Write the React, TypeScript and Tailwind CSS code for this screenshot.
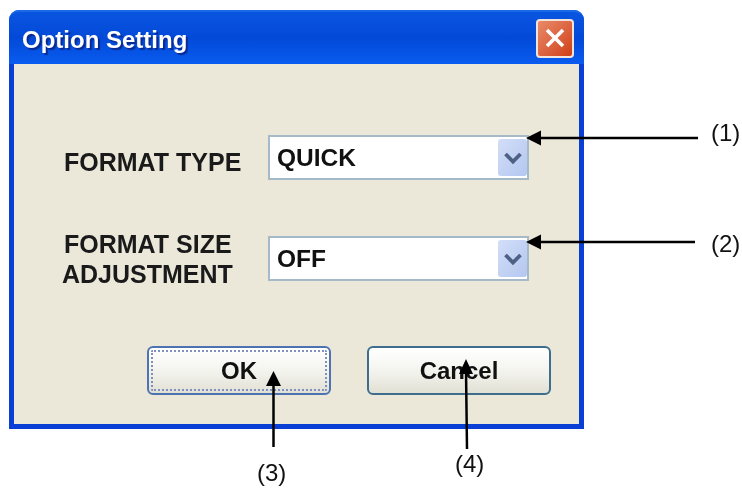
const labelFont = "font-['Liberation_Sans',sans-serif]";

function Combo({ value }: { value: string }) {
  return (
    <div className="flex h-[45px] w-[261px] items-center justify-between border-2 border-[#a5b9c9] bg-white pl-[7px]">
      <span className="pt-[1px] text-[24.5px] font-bold text-[#111]">{value}</span>
      <span className="flex h-[37px] w-[29px] items-center justify-center rounded-[3px] bg-gradient-to-br from-[#d3def8] to-[#b4c7f0]">
        <svg width="20" height="14" viewBox="0 0 20 14" fill="none">
          <path d="M2.5 3 10 10.5 17.5 3" stroke="#4d6185" strokeWidth="3.8" />
        </svg>
      </span>
    </div>
  );
}

function Button({ label, focused }: { label: string; focused?: boolean }) {
  return (
    <button
      className={`flex h-[49px] w-[184px] items-center justify-center rounded-[6px] border-2 bg-gradient-to-b from-white via-[#f4f4ef] to-[#e2e0d4] text-[24px] font-bold text-[#111] ${
        focused ? 'border-[#4d74b0]' : 'border-[#3f6d8e]'
      }`}
    >
      {focused ? (
        <span className="flex h-[41px] w-[176px] items-center justify-center rounded-[2px] border-2 border-dotted border-[#7f8fc0]">
          {label}
        </span>
      ) : (
        label
      )}
    </button>
  );
}

export default function App() {
  return (
    <div className={`relative h-[493px] w-[742px] overflow-hidden bg-white pl-[9px] pt-[10px] blur-[0.4px] ${labelFont}`}>
      <div className="flex h-[419px] w-[575px] flex-col rounded-t-[10px] bg-[#0a3fd6] px-[5px] pb-[5px]">
        <div className="-mx-[5px] flex h-[54px] shrink-0 items-center justify-between rounded-t-[10px] border-t-2 border-[#1a6ae8] bg-gradient-to-b from-[#0a55e0] via-[#0349d8] to-[#0a5cf0] pl-[13px] pr-[10px]">
          <span className="pt-[3px] text-[24px] font-bold text-white [text-shadow:2px_2px_1px_#0a2a90]">
            Option Setting
          </span>
          <span className="flex h-[39px] w-[38px] items-center justify-center rounded-[4px] border-2 border-[#f0e4dc] bg-gradient-to-br from-[#e98a68] to-[#cf3d12]">
            <svg width="24" height="24" viewBox="0 0 24 24" fill="none">
              <path d="M4 4 20 20M20 4 4 20" stroke="#fff" strokeWidth="3.6" />
            </svg>
          </span>
        </div>
        <div className="flex flex-1 flex-col bg-[#ebe8da] pt-[71px]">
          <div className="flex h-[45px] items-center pl-[50px]">
            <span className="w-[204px] pt-[8px] text-[25px] font-bold leading-[30px] text-[#1a1a1a]">FORMAT TYPE</span>
            <Combo value="QUICK" />
          </div>
          <div className="mt-[56px] flex h-[45px] items-center pl-[48px]">
            <span className="w-[206px] text-[25px] font-bold leading-[30px] text-[#1a1a1a]">
              <span className="pl-[2px]">FORMAT SIZE</span>
              <br />
              ADJUSTMENT
            </span>
            <Combo value="OFF" />
          </div>
          <div className="mt-[65px] flex gap-[36px] pl-[133px]">
            <Button label="OK" focused />
            <Button label="Cancel" />
          </div>
        </div>
      </div>

      {/* callouts */}
      <svg className="absolute left-0 top-0" width="742" height="493" viewBox="0 0 742 493" fill="none">
        <path d="M698 138H538" stroke="#000" strokeWidth="2.5" />
        <path d="M526 138 541 130.5V145.5Z" fill="#000" />
        <path d="M695 242H538" stroke="#000" strokeWidth="2.5" />
        <path d="M526 242 541 234.5V249.5Z" fill="#000" />
        <path d="M273.5 447V382" stroke="#000" strokeWidth="2.5" />
        <path d="M273.5 371 281 386H266Z" fill="#000" />
        <path d="M467 449 466 370" stroke="#000" strokeWidth="2.5" />
        <path d="M466 359 473 374H459Z" fill="#000" />
      </svg>
      <span className="absolute left-[711px] top-[118px] text-[24px] leading-[30px] text-[#111]">(1)</span>
      <span className="absolute left-[711px] top-[229px] text-[24px] leading-[30px] text-[#111]">(2)</span>
      <span className="absolute left-[257px] top-[458px] text-[24px] leading-[30px] text-[#111]">(3)</span>
      <span className="absolute left-[455px] top-[449px] text-[24px] leading-[30px] text-[#111]">(4)</span>
    </div>
  );
}
